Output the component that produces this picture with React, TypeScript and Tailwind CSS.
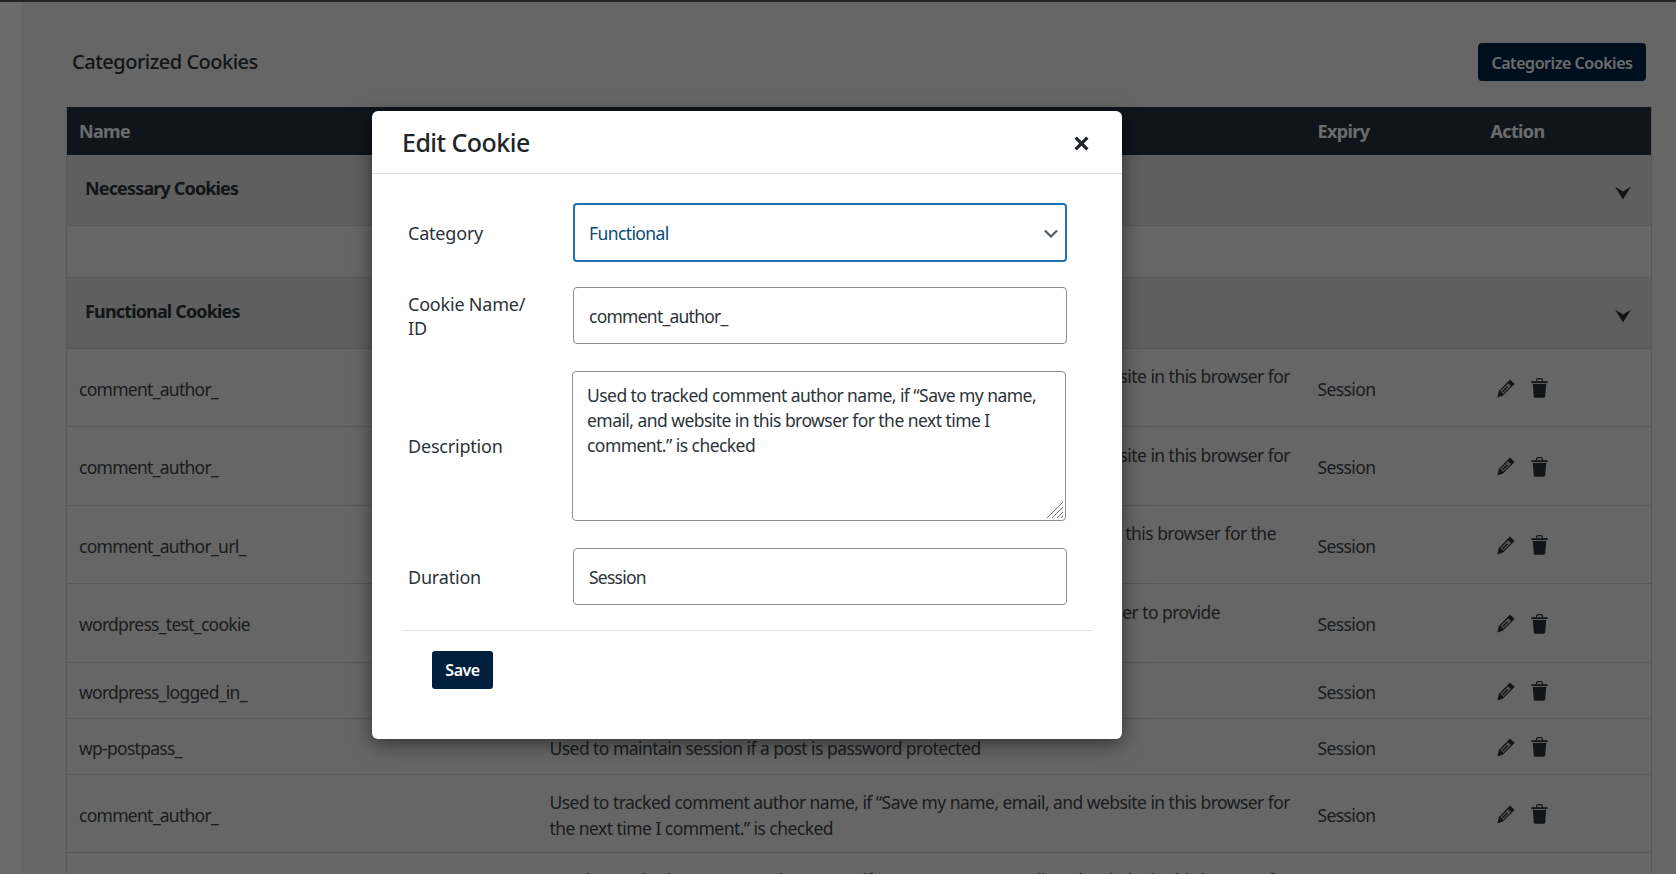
import React from "react";

const font = { fontFamily: '"Noto Sans", "Open Sans", sans-serif' };

type Row = { name: string; l1: string; l2?: string; h: string };
const rows: Row[] = [
  { name: "comment_author_", l1: "Used to tracked comment author name, if “Save my name, email, and website in this browser for", l2: "the next time I comment.” is checked", h: "h-[78px]" },
  { name: "comment_author_", l1: "Used to tracked comment author name, if “Save my name, email, and website in this browser for", l2: "the next time I comment.” is checked", h: "h-[79px]" },
  { name: "comment_author_url_", l1: "Used to track comment author url, if “Save my name, email, and website in this browser for the", l2: "next time I comment.” is checked", h: "h-[78px]" },
  { name: "wordpress_test_cookie", l1: "Used to check if the users browser accepts cookies set by WordPress in order to provide", l2: "a better experience", h: "h-[79px]" },
  { name: "wordpress_logged_in_", l1: "Used to store the logged in user session", h: "h-[56px]" },
  { name: "wp-postpass_", l1: "Used to maintain session if a post is password protected", h: "h-[56px]" },
  { name: "comment_author_", l1: "Used to tracked comment author name, if “Save my name, email, and website in this browser for", l2: "the next time I comment.” is checked", h: "h-[78px]" },
  { name: "comment_author_", l1: "Used to tracked comment author name, if “Save my name, email, and website in this browser for", l2: "the next time I comment.” is checked", h: "h-[78px]" },
];

function Pencil() {
  return (
    <svg width="18" height="19" viewBox="0 0 18 19" className="block">
      <path d="M13 0.6 17.6 5 6 16.6 0.4 18.6 1.8 12Z" fill="#2c3338" />
      <path d="M11.2 4.2 14 7 6.2 14.8 3.4 12Z" fill="#c4c4c4" />
      <path d="M10 7.2 11 8.2 6 13.2 5 12.2Z" fill="#2c3338" />
    </svg>
  );
}

function Trash() {
  return (
    <svg width="17" height="20" viewBox="0 0 17 20" className="block">
      <path d="M5.6 3.4V2.2C5.6 1 6.4.6 7.2.6h2.6c.8 0 1.6.4 1.6 1.6v1.2" fill="none" stroke="#2c3338" strokeWidth="1.2" />
      <path d="M.4 3.2h16.2v1.9H.4Z" fill="#2c3338" />
      <path d="M1.8 6h13.4l-1 12.6c0 .7-.6 1.2-1.2 1.2H4c-.6 0-1.2-.5-1.2-1.2Z" fill="#2c3338" />
    </svg>
  );
}

function GroupArrow() {
  return (
    <svg width="16" height="14" viewBox="0 0 16 14" className="block mt-[7px]">
      <path d="M0 .5 8 5.5 16 .5 8 13.5Z" fill="#2c3338" />
    </svg>
  );
}

function GroupRow({ title, h }: { title: string; h: string }) {
  return (
    <tr className={`${h} bg-[#e2e2e2] border-b border-[#d2d2d2]`}>
      <td colSpan={4} className="p-0">
        <div className="flex items-center justify-between pl-[18px] pr-[20px]">
          <span className="text-[18px] font-bold text-[#2c3338] tracking-[-0.85px] -mt-[3px]">{title}</span>
          <GroupArrow />
        </div>
      </td>
    </tr>
  );
}

function Field({ label, children, className }: { label: React.ReactNode; children: React.ReactNode; className?: string }) {
  return (
    <div className={`grid grid-cols-[171px_494px] items-center ${className ?? ""}`}>
      <label className="text-[18px] leading-[24px] text-[#2c3338] pl-[6px] tracking-[-0.2px]">{label}</label>
      {children}
    </div>
  );
}

export default function App() {
  const inputCls =
    "w-full h-[57px] border border-[#8c8f94] rounded-[4px] bg-white px-[15px] text-[17.5px] text-[#2c3338] tracking-[-0.75px] outline-none";
  return (
    <div className="relative h-[874px] w-[1676px] overflow-hidden bg-[#ffffff]" style={font}>
      <div className="h-[2px] bg-[#50555a]" />
      <div className="flex h-[872px]">
        <div className="w-[22px] shrink-0 bg-white" />
        <main className="flex-1 bg-[#f3f3f3] pl-[44px] pr-[25px] pt-[41px]">
          <div className="flex items-center justify-between pl-[6px] pr-[6px] mb-[26px]">
            <h2 className="text-[20px] font-medium text-[#2c3338] tracking-[-0.5px]">Categorized Cookies</h2>
            <button className="h-[38px] w-[168px] rounded-[4px] bg-[#002545] pt-[2px] text-[16px] font-semibold text-white tracking-[-0.45px]">
              Categorize Cookies
            </button>
          </div>
          <table className="w-[1585px] table-fixed border-collapse border-x border-[#d2d2d2]">
            <colgroup>
              <col className="w-[471px]" />
              <col className="w-[768px]" />
              <col className="w-[173px]" />
              <col className="w-[173px]" />
            </colgroup>
            <thead>
              <tr className="h-[48px] bg-[#243240] text-left text-white text-[18px]">
                <th className="pl-[12px] font-bold tracking-[-0.65px]">Name</th>
                <th />
                <th className="pl-[12px] font-bold tracking-[-0.6px]">Expiry</th>
                <th className="pl-[12px] font-bold tracking-[-0.65px]">Action</th>
              </tr>
            </thead>
            <tbody className="text-[17.5px] text-[#3f4449]">
              <GroupRow title="Necessary Cookies" h="h-[70px]" />
              <tr className="h-[52px] border-b border-[#d2d2d2]">
                <td colSpan={4} />
              </tr>
              <GroupRow title="Functional Cookies" h="h-[71px]" />
              {rows.map((r, i) => (
                <tr key={i} className={`${r.h} border-b border-[#d2d2d2]`}>
                  <td className="pl-[12px] pt-[4px] tracking-[-0.72px]">{r.name}</td>
                  <td className="pl-[12px] pt-[4px] leading-[26px] whitespace-nowrap tracking-[-0.55px]">
                    {r.l1}
                    {r.l2 ? <br /> : null}
                    {r.l2}
                  </td>
                  <td className="pl-[12px] pt-[4px] tracking-[-0.6px]">Session</td>
                  <td className="pl-[18px] pt-[4px]">
                    <div className="flex items-center gap-[16px] -mt-[2px]">
                      <Pencil />
                      <Trash />
                    </div>
                  </td>
                </tr>
              ))}
            </tbody>
          </table>
        </main>
      </div>

      <div className="absolute inset-0 bg-black/58" />

      <div className="absolute left-[372px] top-[111px] h-[628px] w-[750px] rounded-[6px] bg-white shadow-[0_5px_20px_rgba(0,0,0,0.5)]">
        <div className="flex h-[63px] items-center justify-between border-b border-[#dee2e6] pl-[30px] pr-[33px]">
          <h3 className="mt-[2px] text-[25px] font-medium text-[#212529] tracking-[-0.55px]">Edit Cookie</h3>
          <svg width="15" height="15" viewBox="0 0 14 14" className="mt-[2px]">
            <path d="M1.5 1.5 12.5 12.5M12.5 1.5 1.5 12.5" stroke="#212529" strokeWidth="3" />
          </svg>
        </div>
        <div className="px-[30px] pt-[29px]">
          <Field label="Category" className="mb-[25px]">
            <div className="relative">
              <select
                defaultValue="Functional"
                className="block w-full h-[59px] appearance-none rounded-[4px] border-2 border-[#2271b1] bg-white pl-[14px] pt-[2px] text-[17.5px] text-[#0a4b78] tracking-[-0.6px] outline-none"
              >
                <option>Functional</option>
              </select>
              <svg width="20" height="20" viewBox="0 0 20 20" className="absolute right-[6px] top-[21px]">
                <path d="M5 6l5 5 5-5 2 1-7 7-7-7 2-1z" fill="#50575e" />
              </svg>
            </div>
          </Field>
          <Field label={<>Cookie Name/<br />ID</>} className="mb-[27px]">
            <input className={inputCls} defaultValue="comment_author_" />
          </Field>
          <Field label="Description" className="mb-[27px]">
            <div className="relative -ml-[1px] w-[494px]">
              <textarea
                className="block h-[150px] w-full resize-none rounded-[4px] border border-[#8c8f94] bg-white px-[14px] pt-[11px] text-[17.5px] leading-[25px] text-[#2c3338] tracking-[-0.55px] outline-none"
                defaultValue="Used to tracked comment author name, if “Save my name, email, and website in this browser for the next time I comment.” is checked"
              />
              <svg width="18" height="18" viewBox="0 0 18 18" className="absolute bottom-[2px] right-[2px]">
                <path d="M1 17 17 1M6 17 17 6M11 17 17 11M15 17 17 15" stroke="#6f6f6f" strokeWidth="1" />
              </svg>
            </div>
          </Field>
          <Field label="Duration" className="mb-[25px]">
            <input className={inputCls} defaultValue="Session" />
          </Field>
          <div className="border-t border-[#e2e2e2] pt-[20px] pl-[30px]">
            <button className="h-[38px] w-[61px] rounded-[3px] bg-[#001f3f] text-[16px] font-semibold text-white tracking-[-0.5px]">
              Save
            </button>
          </div>
        </div>
      </div>
    </div>
  );
}
